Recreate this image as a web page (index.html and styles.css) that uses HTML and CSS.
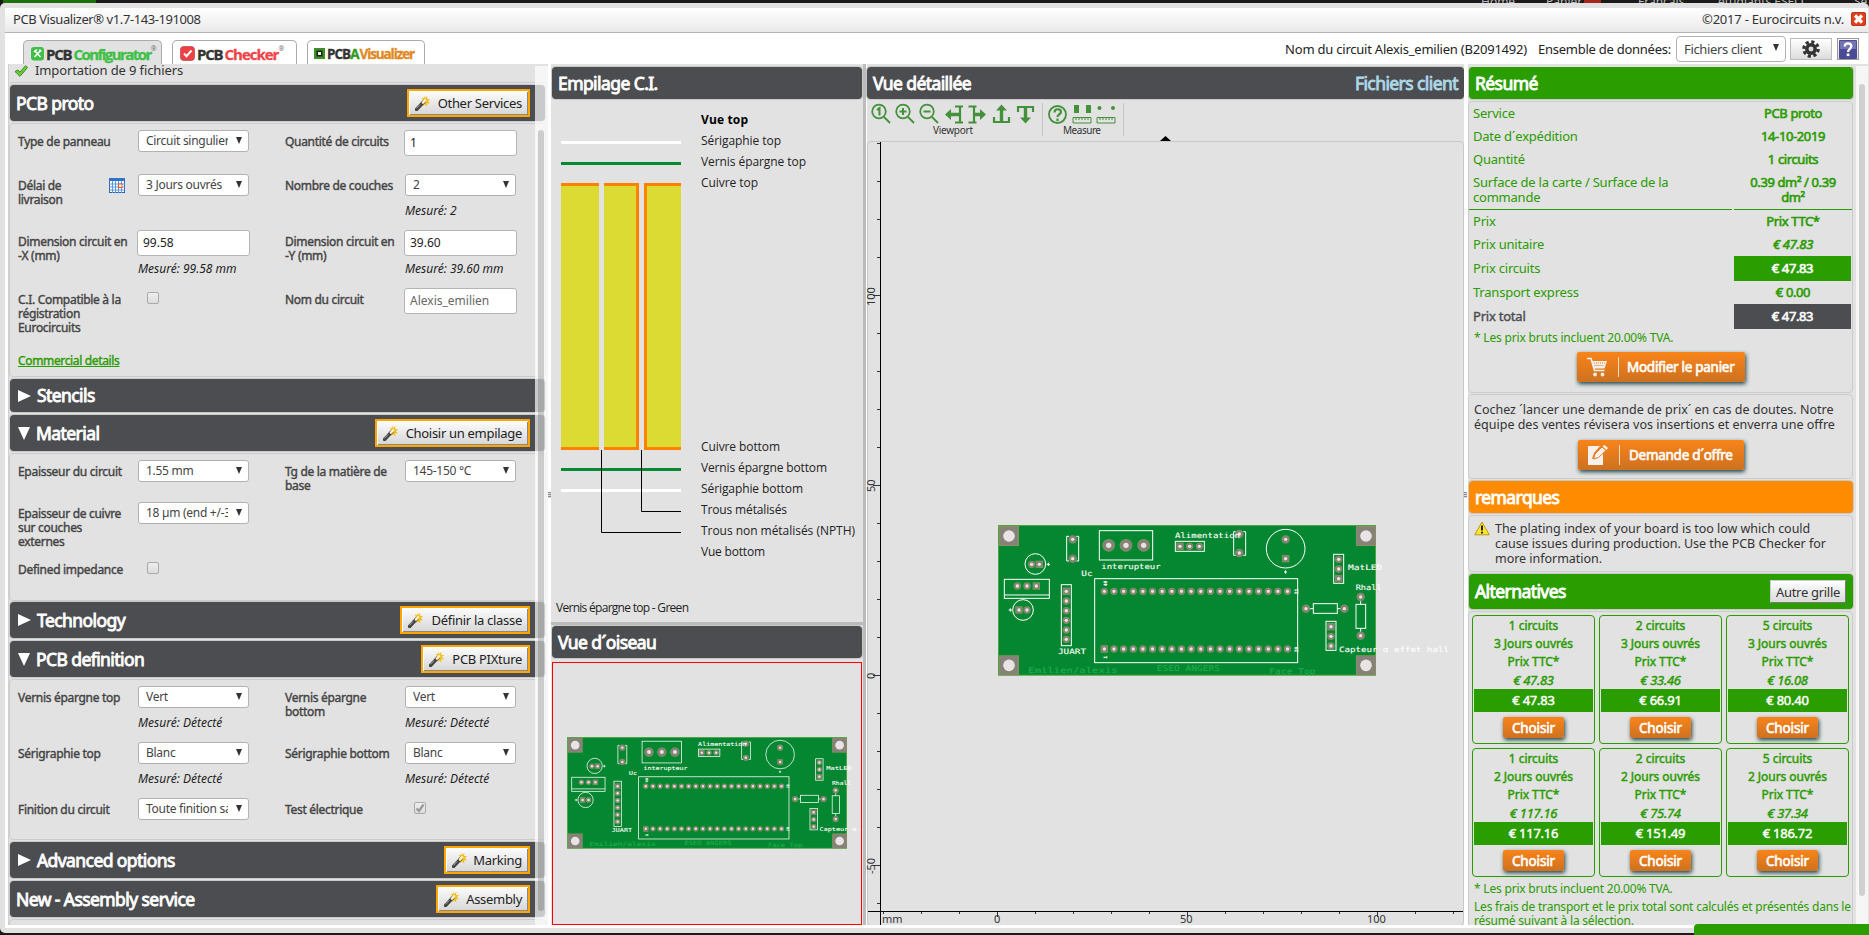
FILE: index.html
```html
<!DOCTYPE html>
<html lang="fr">
<head>
<meta charset="utf-8">
<title>PCB Visualizer</title>
<link rel="stylesheet" href="styles.css">
</head>
<body>
<svg class="defs" width="0" height="0">
  <defs>
    <g id="wand">
      <path d="M9 0l1 3 2.500-2-.5 3 3 0-2 2.200 2 2-3 .3.300 3-2.300-2-2 1.500.2-3-2.700-1 2.500-1.500L7 2.500l2.200.8z" fill="#f3bd1d"/>
      <path d="M1.500 14.500L9 6.500" stroke="#444" stroke-width="3.400" stroke-linecap="round"/>
      <path d="M1.500 13.300L5 9.500" stroke="#aaa" stroke-width="1"/>
      <path d="M8 7.500L10 5.300" stroke="#fff7c9" stroke-width="2.600" stroke-linecap="round"/>
    </g>
    <g id="hole"><circle r="12.500" fill="#7d9a4f"/><circle r="11" fill="#878279"/><circle r="5" fill="#e8e4e4"/></g>
    <g id="pin"><circle r="11" fill="#7d9a4f"/><circle r="9.500" fill="#878279"/><circle r="5" fill="#e8e4e4"/></g>
    <g id="sqpin"><rect x="-11" y="-11" width="22" height="22" fill="#7d9a4f"/><rect x="-9.500" y="-9.500" width="19" height="19" fill="#878279"/><circle r="5" fill="#e8e4e4"/></g>
    <g id="big"><circle r="19" fill="#7d9a4f"/><circle r="17.500" fill="#878279"/><circle r="8" fill="#e8e4e4"/></g>
    <g id="corner"><rect x="-30" y="-30" width="60" height="60" fill="#8d9a52"/><rect x="-28.500" y="-28.500" width="57" height="57" fill="#878279"/><circle r="17.500" fill="#e8e4e4"/></g>
    <g id="board">
      <rect x="40.500" y="46.500" width="1131" height="449" fill="#058731" stroke="#4ca53d" stroke-width="3"/>
      <use href="#corner" x="72" y="78"/><use href="#corner" x="1143" y="78"/><use href="#corner" x="72" y="466"/><use href="#corner" x="1143" y="466"/>
      <g fill="none" stroke="#fff" stroke-width="3">
        <path d="M252 79h-7v74h7M274 79h7v74h-7M752 65h-6v71h6M775 65h7v71h-7"/>
        <rect x="343" y="62" width="160" height="88"/><rect x="571" y="94" width="87" height="30"/>
        <circle cx="902" cy="116" r="58"/><circle cx="151" cy="162" r="31"/><circle cx="114" cy="300" r="31"/>
        <rect x="58" y="208" width="135" height="57"/><path d="M58 255h135"/>
        <rect x="229" y="224" width="30" height="183"/><rect x="329" y="206" width="609" height="252"/>
        <rect x="1046" y="133" width="30" height="87"/><rect x="1023" y="334" width="30" height="87"/>
        <rect x="985" y="281" width="72" height="29"/><path d="M975 296h10M1057 296h10M1127 272v11M1127 355v11"/>
        <rect x="1113" y="283" width="29" height="72"/>
        <path d="M185 163h10M190 158v10M71 300h10M76 295v10M897 186h9M901.500 181v10"/>
      </g>
      <use href="#hole" x="263" y="88"/><use href="#hole" x="263" y="146"/><use href="#hole" x="763" y="72"/><use href="#hole" x="763" y="129"/>
      <use href="#big" x="371" y="106"/><use href="#big" x="423" y="106"/><use href="#big" x="476" y="106"/>
      <use href="#sqpin" x="585" y="109"/><use href="#pin" x="614" y="109"/><use href="#pin" x="643" y="109"/>
      <use href="#hole" x="902" y="88"/><use href="#sqpin" x="902" y="146"/>
      <use href="#pin" x="140" y="163"/><use href="#sqpin" x="163" y="163"/><use href="#sqpin" x="102" y="300"/><use href="#pin" x="126" y="300"/>
      <use href="#pin" x="97" y="228"/><use href="#pin" x="126" y="228"/><use href="#sqpin" x="154" y="228"/>
      <use href="#sqpin" x="244" y="244"/><use href="#pin" x="244" y="273"/><use href="#pin" x="244" y="302"/><use href="#pin" x="244" y="331"/><use href="#pin" x="244" y="360"/><use href="#pin" x="244" y="388"/>
      <use href="#pin" x="1061" y="148"/><use href="#pin" x="1061" y="177"/><use href="#sqpin" x="1061" y="206"/>
      <use href="#sqpin" x="1038" y="350"/><use href="#pin" x="1038" y="379"/><use href="#pin" x="1038" y="408"/>
      <use href="#hole" x="963" y="296"/><use href="#hole" x="1078" y="296"/><use href="#hole" x="1127" y="261"/><use href="#hole" x="1127" y="377"/>
      <g stroke-linecap="round" stroke-dasharray="0 28.930" fill="none">
        <path d="M358 244H909M358 417H909" stroke="#7d9a4f" stroke-width="22"/>
        <path d="M358 244H909M358 417H909" stroke="#878279" stroke-width="19"/>
        <path d="M358 244H909M358 417H909" stroke="#e8e4e4" stroke-width="10"/>
      </g>
      <use href="#sqpin" x="358" y="417"/>
      <g class="silk">
        <text x="570" y="83" textLength="195" lengthAdjust="spacingAndGlyphs">Alimentation</text>
        <text x="349" y="178" textLength="178" lengthAdjust="spacingAndGlyphs">interupteur</text>
        <text x="289" y="197" textLength="34" lengthAdjust="spacingAndGlyphs">Uc</text>
        <text x="219" y="431" textLength="84" lengthAdjust="spacingAndGlyphs">JUART</text>
        <text x="1089" y="179" textLength="103" lengthAdjust="spacingAndGlyphs">MatLED</text>
        <text x="1112" y="241" textLength="78" lengthAdjust="spacingAndGlyphs">Rhall</text>
        <text x="1062" y="425" textLength="330" lengthAdjust="spacingAndGlyphs">Capteur α effet hall</text>
        <text class="tiny" transform="translate(365 229) rotate(-90)">40</text>
        <text class="tiny" transform="translate(938 253) rotate(-90)">21</text>
        <text class="tiny" transform="translate(938 427) rotate(-90)">20</text>
        <text class="tiny" transform="translate(365 446) rotate(-90)">1</text>
      </g>
      <g class="copper-text">
        <text x="130" y="488" textLength="268" lengthAdjust="spacingAndGlyphs">Emilien/alexis</text>
        <text x="515" y="483" textLength="190" lengthAdjust="spacingAndGlyphs">ESEO ANGERS</text>
        <text x="853" y="492" textLength="139" lengthAdjust="spacingAndGlyphs">Face Top</text>
      </g>
    </g>
  </defs>
</svg>

<div class="site-strip"><i class="site-tab"></i><div class="site-links"><span class="s1">Home</span><span class="s2">Panier</span><b></b><span class="s3">Français</span><span class="s4">étudiants ESEO</span><span class="s5">Se</span></div></div>
<div class="window">
  <header class="titlebar">
    <span class="app-name">PCB Visualizer® v1.7-143-191008</span>
    <span class="copyright">©2017 - Eurocircuits n.v.</span>
    <svg class="close" width="15" height="14" viewBox="0 0 15 14"><rect x=".5" y=".5" width="14" height="13" rx="1.500" fill="#e2401c" stroke="#b9371c"/><path d="M4 3.500l7 7M11 3.500l-7 7" stroke="#fff" stroke-width="3.200"/></svg>
  </header>
  <nav class="toolbar">
    <div class="tabs">
      <div class="tab t1 active">
        <svg width="13" height="14" viewBox="0 0 13 14"><rect width="13" height="13.500" rx="3" fill="#3fbf45"/><path d="M3.500 3.500l6 6.500M9.500 3.500l-6 6.500" stroke="#fff" stroke-width="1.500"/><path d="M3 5l3-2.500M8.500 2.500l1.800 2" stroke="#fff" stroke-width="1.500"/></svg>
        <b class="pcb">PCB</b><b class="green">Configurator</b><sup>®</sup>
      </div>
      <div class="tab t2">
        <svg width="15" height="15" viewBox="0 0 15 15"><rect x=".7" y=".7" width="13.600" height="13.600" rx="2.500" fill="#f04046" stroke="#c3434a"/><path d="M4 7.500l2.500 2.700L11.500 4.500" stroke="#fff" stroke-width="2" fill="none"/></svg>
        <b class="pcb">PCB</b><b class="red">Checker</b><sup>®</sup>
      </div>
      <div class="tab t3">
        <svg width="11" height="11" viewBox="0 0 11 11"><rect width="11" height="11" fill="#3f8f2d"/><rect x="2.500" y="2.500" width="6" height="6" fill="#13250f"/><rect x="4" y="4" width="3" height="3" fill="#eee"/></svg>
        <b class="pcb">PCB</b><b class="agreen">A</b><b class="orange">Visualizer</b>
      </div>
    </div>
    <span class="circuit">Nom du circuit Alexis_emilien (B2091492)</span>
    <span class="dataset">Ensemble de données:</span>
    <div class="select big"><span>Fichiers client</span></div>
    <button class="gear"><svg width="18" height="18" viewBox="-8 -8 16 16"><circle r="5.300" fill="#333"/><circle r="6.400" fill="none" stroke="#333" stroke-width="2.800" stroke-dasharray="2.800 2.227"/><circle r="2.200" fill="#ddd"/></svg></button>
    <button class="help"><svg width="18" height="19" viewBox="0 0 18 19"><rect width="18" height="19" rx="1" fill="#4a4a96"/><rect x="1" y="1" width="16" height="8" fill="#7474b5"/><path d="M5.800 6.500C5.800 2.200 12.300 2.500 12.300 6.200 12.300 8.800 9 8.800 9 12" fill="none" stroke="#fff" stroke-width="2.300"/><rect x="7.700" y="13.500" width="2.700" height="2.600" fill="#fff"/></svg></button>
  </nav>

  <main>
    <section class="left">
      <div class="import"><svg width="14" height="12" viewBox="0 0 14 12"><path d="M1 6.500l3-1.500 1.800 2.300L11.500.8l2 1.700L6 11.300z" fill="#74cc3d" stroke="#2c8a13"/></svg>Importation de 9 fichiers</div>
      <div class="bar b36"><h2>PCB proto</h2><button class="wiz w1"><svg width="16" height="16"><use href="#wand"/></svg>Other Services</button></div>
      <div class="box p1">
        <div class="row r44"><label>Type de panneau</label><div class="c"><div class="select"><span>Circuit singulier</span></div></div><label>Quantité de circuits</label><div class="c"><div class="input">1</div></div></div>
        <div class="row r56"><label class="with-cal"><span>Délai de<br>livraison</span><svg width="16" height="15" viewBox="0 0 16 15"><rect x=".5" y=".5" width="15" height="14" fill="#fff" stroke="#2b65b5"/><rect width="16" height="3" fill="#2f74c9"/><path d="M3.500 3v12M6.500 3v12M9.500 3v12M12.500 3v12M0 6h16M0 9h16M0 12h16" stroke="#5f97dc"/><rect x="9.500" y="6" width="3.500" height="3.500" fill="#fff" stroke="#e4572c"/></svg></label><div class="c"><div class="select"><span>3 Jours ouvrés</span></div></div><label>Nombre de couches</label><div class="c"><div class="select"><span>2</span></div><em>Mesuré: 2</em></div></div>
        <div class="row r58"><label>Dimension circuit en<br>-X (mm)</label><div class="c"><div class="input">99.58</div><em class="near">Mesuré: 99.58 mm</em></div><label>Dimension circuit en<br>-Y (mm)</label><div class="c"><div class="input">39.60</div><em class="near">Mesuré: 39.60 mm</em></div></div>
        <div class="row r61"><label>C.I. Compatible à la<br>régistration<br>Eurocircuits</label><div class="c"><i class="check"></i></div><label>Nom du circuit</label><div class="c"><div class="input dim">Alexis_emilien</div></div></div>
        <a>Commercial details</a>
      </div>
      <div class="bar b33"><i class="tri closed"></i><h2>Stencils</h2></div>
      <div class="bar b36"><i class="tri open"></i><h2>Material</h2><button class="wiz w2"><svg width="16" height="16"><use href="#wand"/></svg>Choisir un empilage</button></div>
      <div class="box p2">
        <div class="row r42"><label>Epaisseur du circuit</label><div class="c"><div class="select"><span>1.55 mm</span></div></div><label>Tg de la matière de<br>base</label><div class="c"><div class="select"><span>145-150 °C</span></div></div></div>
        <div class="row r56"><label>Epaisseur de cuivre<br>sur couches<br>externes</label><div class="c"><div class="select"><span>18 µm (end +/-35)</span></div></div></div>
        <div class="row"><label>Defined impedance</label><div class="c"><i class="check"></i></div></div>
      </div>
      <div class="bar b36"><i class="tri closed"></i><h2>Technology</h2><button class="wiz w3"><svg width="16" height="16"><use href="#wand"/></svg>Définir la classe</button></div>
      <div class="bar b36"><i class="tri open"></i><h2>PCB definition</h2><button class="wiz w4"><svg width="16" height="16"><use href="#wand"/></svg>PCB PIXture</button></div>
      <div class="box p3">
        <div class="row r56"><label>Vernis épargne top</label><div class="c"><div class="select"><span>Vert</span></div><em>Mesuré: Détecté</em></div><label>Vernis épargne<br>bottom</label><div class="c"><div class="select"><span>Vert</span></div><em>Mesuré: Détecté</em></div></div>
        <div class="row r56"><label>Sérigraphie top</label><div class="c"><div class="select"><span>Blanc</span></div><em>Mesuré: Détecté</em></div><label>Sérigraphie bottom</label><div class="c"><div class="select"><span>Blanc</span></div><em>Mesuré: Détecté</em></div></div>
        <div class="row"><label>Finition du circuit</label><div class="c"><div class="select"><span>Toute finition sans plomb</span></div></div><label>Test électrique</label><div class="c"><i class="check"><svg width="10" height="10" viewBox="0 0 10 10"><path d="M1.500 5.500L4 8 8.500 1.500" fill="none" stroke="#999" stroke-width="2.200"/></svg></i></div></div>
      </div>
      <div class="bar b36"><i class="tri closed"></i><h2>Advanced options</h2><button class="wiz w5"><svg width="16" height="16"><use href="#wand"/></svg>Marking</button></div>
      <div class="bar b36"><h2>New - Assembly service</h2><button class="wiz w6"><svg width="16" height="16"><use href="#wand"/></svg>Assembly</button></div>
      <div class="box last"></div>
      <div class="scroll"><i></i></div>
    </section>
    <div class="gutter"><i></i></div>

    <section class="stack">
      <div class="bar b32"><h2>Empilage C.I.</h2></div>
      <svg class="layers" width="312" height="523" viewBox="551 99 312 523">
        <path d="M561 142.500H681M561 490.500H681" stroke="#fff" stroke-width="3"/>
        <path d="M561 163.500H681M561 469.500H681" stroke="#078a32" stroke-width="3"/>
        <path d="M561 183h38v267h-38zM604 183h35v267h-35zM644 183h37v267h-37z" fill="#fe8200"/>
        <path d="M561 186h38v261h-38zM604 186h32v261h-32zM647 186h34v261h-34z" fill="#dbdb33"/>
        <path d="M601.500 450V532.500H681M641.500 450V511.500H681" fill="none" stroke="#000"/>
        <g class="layer-names">
          <text x="701" y="124" class="strong" textLength="47">Vue top</text><text x="701" y="145" textLength="80">Sérigaphie top</text><text x="701" y="166" textLength="105">Vernis épargne top</text><text x="701" y="187" textLength="57">Cuivre top</text>
          <text x="701" y="451" textLength="79">Cuivre bottom</text><text x="701" y="472" textLength="126">Vernis épargne bottom</text><text x="701" y="493" textLength="102">Sérigaphie bottom</text><text x="701" y="514" textLength="86">Trous métalisés</text><text x="701" y="535" textLength="154">Trous non métalisés (NPTH)</text><text x="701" y="556" textLength="64">Vue bottom</text>
          <text x="556" y="612" textLength="133">Vernis épargne top - Green</text>
        </g>
      </svg>
      <div class="split"></div>
      <div class="bar b32"><h2>Vue d´oiseau</h2></div>
      <div class="bird"><svg width="308" height="261" viewBox="553 663 308 261"><g transform="translate(557.400 725.900) scale(.24690)"><use href="#board"/></g></svg></div>
    </section>
    <div class="vsplit"></div>

    <section class="detail">
      <div class="bar b32"><h2>Vue détaillée</h2><h2 class="file">Fichiers client</h2></div>
      <div class="tools">
        <svg width="270" height="42" viewBox="867 99 270 42">
          <g fill="none" stroke="#44913b" stroke-width="1.800">
            <circle cx="879" cy="111.500" r="6.800"/><path d="M884 117l6 6"/><circle cx="903" cy="111.500" r="6.800"/><path d="M908 117l6 6"/><circle cx="927" cy="111.500" r="6.800"/><path d="M932 117l6 6"/>
            <path d="M877 110l2.500-2v7.500M899.500 111.500h7M903 108v7M923.500 111.500h7" stroke-width="2"/>
            <path d="M960 106v17M955 106.500h8M955 122.500h8M974 106v17M968.500 106.500h8M968.500 122.500h8" stroke-width="2.200"/>
            <path d="M950 114.500h9M974 114.500h7" stroke-width="3.400"/>
            <path d="M994 117v5h15V117M1018 112v-5h15v5" stroke-width="2.200"/>
            <path d="M1001.500 110v12M1025.500 107v11" stroke-width="3.400"/>
            <circle cx="1057.500" cy="114.500" r="8.500"/><path d="M1054.500 112.500c0-4.500 6.500-4 6.500-.5 0 2.500-3.500 2-3.500 5M1057.500 118.500v2.500" stroke-width="2.200"/>
            <path d="M1073 117.500h18v5.500h-18zM1097 117.500h18v5.500h-18zM1076 118v2M1079 118v2M1082 118v2M1085 118v2M1088 118v2M1100 118v2M1103 118v2M1106 118v2M1109 118v2M1112 118v2" stroke-width="1"/>
          </g>
          <path d="M945 114.500l6-5.500v11zM986 114.500l-6-5.500v11zM1001.500 104.500l5.500 6h-11zM1025.500 123.500l5.500-6h-11zM1074 105h5v8h-5zM1086 105h5v8h-5z" fill="#44913b"/><circle cx="1099.500" cy="108" r="2" fill="#44913b"/><circle cx="1113" cy="108" r="2" fill="#44913b"/>
          <path d="M1042.500 103v33M1123.500 103v33" stroke="#c4c4c4"/>
          <g class="tool-names"><text x="933" y="134" textLength="40">Viewport</text><text x="1063" y="134" textLength="38">Measure</text></g>
        </svg>
      </div>
      <div class="canvas">
        <svg width="595" height="783" viewBox="868 142 595 783">
          <path d="M1160 141l5.500-5 5.500 5z" fill="#000"/>
          <path d="M880.500 142V925M868 911.500H1463" stroke="#000"/>
          <path d="M877 143.500h3M877 181.500h3M877 219.500h3M877 257.500h3M873 295.500h7M877 333.500h3M877 371.500h3M877 409.500h3M877 447.500h3M873 485.500h7M877 523.500h3M877 561.500h3M877 599.500h3M877 637.500h3M873 675.500h7M877 713.500h3M877 751.500h3M877 789.500h3M877 827.500h3M873 865.500h7M877 903.500h3" stroke="#333"/>
          <path d="M883.500 912v2M921.500 912v2M959.500 912v2M997.500 912v5M1035.500 912v2M1073.500 912v2M1111.500 912v2M1149.500 912v2M1187.500 912v5M1225.500 912v2M1263.500 912v2M1301.500 912v2M1339.500 912v2M1377.500 912v5M1415.500 912v2M1453.500 912v2" stroke="#333"/>
          <g class="scale"><text x="882" y="923">mm</text><text x="994" y="923">0</text><text x="1180" y="923">50</text><text x="1367" y="923">100</text>
            <text transform="translate(875 679) rotate(-90)">0</text><text transform="translate(875 492) rotate(-90)">50</text><text transform="translate(875 306) rotate(-90)">100</text><text transform="translate(875 874) rotate(-90)">-50</text></g>
          <g transform="translate(985 510) scale(.33333)"><use href="#board"/></g>
        </svg>
      </div>
    </section>
    <div class="gutter narrow"><i></i></div>

    <section class="right">
      <div class="content">
        <div class="bar b32 greenbar"><h2>Résumé</h2></div>
        <div class="box summary">
          <div class="kv"><span>Service</span><b>PCB proto</b></div>
          <div class="kv"><span>Date d´expédition</span><b>14-10-2019</b></div>
          <div class="kv"><span>Quantité</span><b>1 circuits</b></div>
          <div class="kv two"><span>Surface de la carte / Surface de la<br>commande</span><b>0.39 dm² / 0.39<br>dm²</b></div>
          <div class="kv"><span>Prix</span><b>Prix TTC*</b></div>
          <div class="kv"><span>Prix unitaire</span><b class="it">€ 47.83</b></div>
          <div class="kv k25"><span>Prix circuits</span><b class="fill">€ 47.83</b></div>
          <div class="kv"><span>Transport express</span><b>€ 0.00</b></div>
          <div class="kv k25 total"><span>Prix total</span><b class="fill">€ 47.83</b></div>
          <p class="tva">* Les prix bruts incluent 20.00% TVA.</p>
          <button class="cta cart"><svg width="20" height="20" viewBox="0 0 20 20"><path d="M0 1.500h4l3.500 12h10" fill="none" stroke="#f3eeea" stroke-width="1.700"/><path d="M5 4h15l-2.500 7.500H7.200z" fill="#f3eeea"/><path d="M7 6h11M7.500 8.500h10" stroke="#e87c1c" stroke-dasharray="1 1"/><circle cx="8" cy="17.500" r="1.900" fill="#f3eeea"/><circle cx="15.500" cy="17.500" r="1.900" fill="#f3eeea"/></svg><i></i>Modifier le panier</button>
        </div>
        <div class="box quote"><p>Cochez ´lancer une demande de prix´ en cas de doutes. Notre<br>équipe des ventes révisera vos insertions et enverra une offre</p>
          <button class="cta offer"><svg width="20" height="20" viewBox="0 0 20 20"><path d="M0 1h12L6 8l-2 6 6-2 5-4.500V20H0z" fill="#f6f1ec"/><path d="M5.500 14l1.500-5L14 2l4 3.500-7.500 7z" fill="#f6f1ec" stroke="#e57a1c"/><path d="M14.500 1.500l2-1.500L20 3l-1.500 2z" fill="#f6f1ec"/></svg><i></i>Demande d´offre</button></div>
        <div class="bar b32 orangebar"><h2>remarques</h2></div>
        <div class="box warn"><svg width="16" height="15" viewBox="0 0 16 15"><path d="M8 1L15.300 13.800H.7z" fill="#ffe52e" stroke="#b79a1d" stroke-linejoin="round"/><path d="M8 4.500v5M8 10.800v1.700" stroke="#222" stroke-width="2"/></svg><p>The plating index of your board is too low which could<br>cause issues during production. Use the PCB Checker for<br>more information.</p></div>
        <div class="bar b35 greenbar"><h2>Alternatives</h2><button class="grille">Autre grille</button></div>
        <div class="box alts">
          <div class="cards">
            <div class="card"><p>1 circuits</p><p>3 Jours ouvrés</p><p>Prix TTC*</p><p class="it">€ 47.83</p><b>€ 47.83</b><button>Choisir</button></div>
            <div class="card"><p>2 circuits</p><p>3 Jours ouvrés</p><p>Prix TTC*</p><p class="it">€ 33.46</p><b>€ 66.91</b><button>Choisir</button></div>
            <div class="card"><p>5 circuits</p><p>3 Jours ouvrés</p><p>Prix TTC*</p><p class="it">€ 16.08</p><b>€ 80.40</b><button>Choisir</button></div>
            <div class="card"><p>1 circuits</p><p>2 Jours ouvrés</p><p>Prix TTC*</p><p class="it">€ 117.16</p><b>€ 117.16</b><button>Choisir</button></div>
            <div class="card"><p>2 circuits</p><p>2 Jours ouvrés</p><p>Prix TTC*</p><p class="it">€ 75.74</p><b>€ 151.49</b><button>Choisir</button></div>
            <div class="card"><p>5 circuits</p><p>2 Jours ouvrés</p><p>Prix TTC*</p><p class="it">€ 37.34</p><b>€ 186.72</b><button>Choisir</button></div>
          </div>
          <p class="note1">* Les prix bruts incluent 20.00% TVA.</p>
          <p class="note2">Les frais de transport et le prix total sont calculés et présentés dans le<br>résumé suivant à la sélection.</p>
        </div>
      </div>
      <div class="track"><i></i></div>
    </section>
  </main>
</div>
<div class="chat-tab"></div>
</body>
</html>
```
FILE: styles.css
```css
* { box-sizing: border-box; }
body { margin: 0; width: 1869px; height: 935px; overflow: hidden; position: relative; background: #1c1b1a; font: 12px/14px "Noto Sans", "Open Sans", sans-serif; color: #333; }
h2, p { margin: 0; font-weight: normal; white-space: nowrap; }
button { font: inherit; margin: 0; padding: 0; border: 0; white-space: nowrap; }
svg { display: block; flex: none; }
.defs { position: absolute; }

.site-strip { height: 3px; overflow: hidden; display: flex; align-items: flex-end; }
.site-tab { width: 93px; height: 3px; margin-left: 3px; background: #1f6f0b; flex: none; }
.site-links { display: flex; margin-left: 1385px; color: #bbb; line-height: 14px; margin-bottom: -6px; flex: none; }
.site-links span { white-space: nowrap; }
.s1 { width: 65px; } .s2 { width: 38px; }
.site-links b { width: 17px; height: 14px; background: #a32620; border-radius: 3px; margin-right: 37px; }
.s3 { width: 80px; } .s4 { width: 136px; }

.window { height: 930px; background: #e2e2e2; border-radius: 5px; padding: 5px 1px 5px 5px; }
.titlebar { height: 25px; background: linear-gradient(#fff, #e9e9e9); border-bottom: 1px solid #b3b3b3; display: flex; align-items: center; padding: 0 2px 3px 8px; font-size: 13px; color: #333; }
.app-name { letter-spacing: -.42px; }
.copyright { margin-left: auto; letter-spacing: -.22px; }
.close { margin: 1px 0 0 7px; }
.toolbar { height: 31px; background: #fff; display: flex; align-items: center; padding: 0 9px 0 18px; color: #222; font-size: 13px; white-space: nowrap; }
.tabs { display: flex; gap: 10px; align-self: flex-end; margin-right: auto; }
.tab { height: 24px; border: 1px solid #aaa; border-bottom: 0; border-radius: 5px 5px 0 0; display: flex; align-items: center; padding: 2px 0 0 8px; font: 15px/20px "Open Sans", sans-serif; background: #fff; }
.tab.active { background: #e2e2e2; }
.tab b { -webkit-text-stroke: .3px; }
.t1 { width: 139px; padding-left: 7px; } .t2 { width: 125px; padding-left: 7px; } .t3 { width: 118px; padding-left: 6px; }
.t1 b, .t2 b { letter-spacing: -1.2px; }
.pcb { color: #333; margin-left: 2px; margin-right: 2px; }
.tab .green { color: #3fbf45; font-weight: 700; letter-spacing: -1.55px; }
.red { color: #ef4348; }
.tab.t2 .red { letter-spacing: -1px; }
.tab.t3 b { font-size: 13.500px; letter-spacing: -1px; }
.t3 .pcb { margin-right: 0; }
.agreen { color: #2f9a22; margin-right: 1px; }
.tab.t3 .orange { color: #e0881f; font-weight: 700; letter-spacing: -1.100px; }
.tab sup { font-size: 7px; line-height: 8px; align-self: flex-start; margin-top: 2px; color: #666; }
.circuit { letter-spacing: -.22px; }
.dataset { margin: 0 5px 0 11px; letter-spacing: -.25px; }
.select { width: 111px; height: 22px; background: #fff; border: 1px solid #b2b2b2; border-radius: 3px; display: flex; align-items: center; justify-content: space-between; padding: 0 6px 0 7px; color: #444; }
.select span { width: 82px; overflow: hidden; white-space: nowrap; letter-spacing: -.28px; }
.select::after { content: ""; border: 3px solid transparent; border-top: 7px solid #333; border-bottom: 0; flex: none; margin-top: -2px; }
.select.big { width: 110px; height: 26px; border-radius: 4px; }
.select.big span { letter-spacing: -.35px; }
.gear, .help { height: 22px; background: linear-gradient(#fff, #dcdcdc); border: 1px solid #bbb; display: grid; place-items: center; }
.gear { width: 42px; margin: 1px 5px 0 4px; } .help { width: 22px; margin-top: 1px; border-color: #999; }

main { height: 864px; background: #fff; border-bottom: 3px solid #fff; padding-left: 3px; display: flex; overflow: hidden; }
section { background: #e2e2e2; flex: none; }
.bar { background: #4c4d50; border-radius: 3px; color: #fff; display: flex; align-items: center; padding: 0 15px 0 6px; margin-bottom: 2px; outline: 1px solid #c9c9c9; flex: none; }
.b36 { height: 36px; margin-bottom: 3px; } .b33 { height: 33px; margin-bottom: 3px; } .b32 { height: 32px; } .b35 { height: 35px; }
.bar h2 { font-size: 17.500px; line-height: 24px; letter-spacing: -.58px; -webkit-text-stroke: .85px; padding-bottom: 1px; }
.box { border: 1px solid #cbcbcb; border-radius: 4px; flex: none; }

.left { width: 540px; height: 861px; position: relative; padding: 0 2px 0 1px; border-left: 1px solid #d0d0d0; display: flex; flex-direction: column; overflow: hidden; }
.import { height: 19px; flex: none; margin-bottom: 2px; border-bottom: 1px solid #cbcbcb; display: flex; gap: 7px; padding-left: 4px; font-size: 13px; align-items: flex-start; line-height: 13px; color: #333; letter-spacing: -.12px; }
.import svg { margin-top: 1px; }
.left .bar { width: 535px; }
.left .box { width: 537px; margin-left: -1px; }
.wiz { height: 28px; margin-left: auto; border: 2px solid #ffa500; background: linear-gradient(#fcfcfc, #d6d6d6); background-clip: padding-box; box-shadow: inset 1px 1px #fff, inset -1px -1px #888; font-size: 13px; color: #222; display: flex; align-items: center; justify-content: space-between; padding: 0 6px 1px 6px; letter-spacing: -.3px; }
.w1 { width: 123px; } .w2 { width: 155px; } .w3 { width: 130px; } .w4 { width: 109px; } .w5 { width: 86px; } .w6 { width: 94px; }
.left .box { margin-top: -1px; padding: 6px 0 0 8px; }
.p1 { height: 254px; margin-bottom: 2px; } .p2 { height: 148px; margin-bottom: 1px; } .p3 { height: 161px; margin-bottom: 2px; }
.left .last { height: 20px; padding: 0; }
.row { display: grid; grid-template-columns: 120px 147px 120px 120px; height: 42px; }
.r42 { height: 42px; } .r44 { height: 44px; } .r56 { height: 56px; } .r58 { height: 58px; } .r61 { height: 66px; }
label { padding-top: 5px; color: #444; -webkit-text-stroke: .4px; letter-spacing: -.3px; white-space: nowrap; }
.with-cal { display: flex; justify-content: space-between; padding-right: 13px; }
.with-cal svg { margin-top: -1px; }
.input { width: 113px; height: 26px; margin-left: -1px; background: #fff; border: 1px solid #b5b5b5; border-radius: 3px; padding: 5px 5px; color: #222; }
.input.dim { color: #666; }
em { display: block; margin-top: 8px; white-space: nowrap; letter-spacing: 0; color: #222; }
em.near { margin-top: 6px; }
.check { display: block; width: 12px; height: 12px; border: 1px solid #aaa; border-radius: 2px; background: linear-gradient(#eee, #ddd); margin: 4px 0 0 9px; }
.left a { display: block; color: #2a9c00; text-decoration: underline; -webkit-text-stroke: .4px; letter-spacing: -.35px; }
.tri { margin: 0 6px 0 2px; border: 6px solid transparent; flex: none; }
.tri.closed { border-left: 13px solid #fff; border-right: 0; }
.tri.open { border-top: 13px solid #fff; border-bottom: 0; border-left-width: 6.500px; border-right-width: 6.500px; }
.scroll { position: absolute; top: 2px; right: 0; width: 13px; height: 859px; background: rgba(255,255,255,.7); padding: 64px 3px 0; }
.scroll i { display: block; width: 6px; height: 781px; border-radius: 3px; background: rgba(0,0,0,.17); }

.gutter { width: 3px; background: #fff; display: flex; align-items: center; flex: none; }
.gutter i { width: 3px; height: 6px; background: repeating-linear-gradient(#888 0 1px, #ddd 1px 2px); }
.gutter.narrow { width: 4px; }
.stack { width: 312px; padding: 3px 1px 0; }
.stack .bar, .detail .bar { margin-bottom: 0; }
.layers { margin-left: -1px; }
.layer-names { font: 12px "Open Sans", sans-serif; fill: #222; }
.strong { font-weight: bold; fill: #000; }
.split { height: 3px; background: #bbb; margin: 0 -1px 1px; }
.bird { margin-top: 4px; height: 263px; border: 1px solid red; overflow: hidden; }
.vsplit { width: 3px; background: #bbb; flex: none; margin-right: 1px; }
.detail { width: 597px; padding: 3px 0 0; }
.file { margin-left: auto; color: #add8e6; }
.detail .bar { padding-right: 6px; }
.tools { height: 42px; }
.tool-names { font-size: 10px; fill: #333; }
.canvas { height: 785px; border: 1px solid #c8c8c8; border-radius: 4px; }
.canvas > svg { overflow: visible; }
.scale { font-size: 11px; fill: #333; }
.silk text { font: 22px "DejaVu Sans Mono", monospace; fill: #fff; stroke: #fff; stroke-width: .3px; }
.silk .tiny { font-size: 14px; font-weight: bold; }
.copper-text text { font: 24px "DejaVu Sans Mono", monospace; fill: #1fae4c; stroke: #1fae4c; stroke-width: .3px; }

.right { width: 401px; display: flex; padding-top: 3px; }
.content { width: 388px; height: 858px; overflow: hidden; padding: 0 0 0 1px; color: #2a9c00; display: flex; flex-direction: column; }
.content .bar { width: 384px; }
.content .box { width: 385px; margin-left: -1px; }
.bar.greenbar { background: #2a9d00; } .bar.orangebar { background: #ff8c00; }
.summary { height: 292px; margin-bottom: 1px; }
.kv { height: 23px; display: grid; grid-template-columns: 263px 1fr; column-gap: 2px; font-size: 13px; line-height: 15px; letter-spacing: -.22px; }
.kv span { padding: 4px 0 0 4px; white-space: nowrap; }
.kv b { padding-top: 4px; font-weight: normal; -webkit-text-stroke: .6px; text-align: center; letter-spacing: -.38px; white-space: nowrap; }
.kv.two { height: 39px; } .kv.two > * { border-bottom: 1px solid #2a9c00; }
.k25 { height: 25px; }
.kv .fill { background: #2a9d00; color: #fff; margin-right: 1px; padding-top: 5px; }
.k25 span { padding-top: 5px; }
.total span { color: #4c4d50; -webkit-text-stroke: .4px; }
.kv.total .fill { background: #4c4d50; }
.it { font-style: italic; }
.tva { padding: 2px 0 0 5px; height: 23px; letter-spacing: -.18px; }
.cta { height: 30px; background: linear-gradient(#f98419, #cd7120); border-radius: 2px; box-shadow: 1px 2px 4px #1d4549; color: #fff; font-size: 13.500px; -webkit-text-stroke: .6px; letter-spacing: -.28px; display: flex; align-items: center; padding: 0 10px; margin: 0 auto; }
.cta i { width: 1px; height: 20px; background: #f3dcc8; margin: 0 9px 0 11px; }
.cart { width: 168px; } .offer { width: 166px; }
.quote { height: 85px; margin-bottom: 2px; padding: 7px 0 0 5px; color: #333; }
.quote p, .warn p { font-size: 12.500px; line-height: 15px; letter-spacing: 0; }
.quote .cta { margin-top: 8px; margin-left: 104px; }
.warn { height: 57px; margin-bottom: 2px; display: flex; gap: 5px; padding: 5px 0 0 5px; color: #333; }
.warn p { letter-spacing: -.03px; }
.grille { margin-left: auto; width: 76px; height: 23px; margin-right: -8px; background: linear-gradient(#fefefe, #dadada); border: 1px solid #ccc; border-right-color: #777; border-bottom-color: #777; font-size: 13px; letter-spacing: -.3px; color: #333; }
.alts { height: 340px; padding: 3px 3px 0; }
.cards { display: grid; grid-template-columns: repeat(3, 123px); gap: 4px; }
.card { height: 129px; border: 1px solid #2a9c00; border-radius: 4px; text-align: center; display: flex; flex-direction: column; padding: 1px; -webkit-text-stroke: .45px; }
.card p { height: 18px; line-height: 17px; letter-spacing: -.05px; }
.card .it { font-size: 13px; letter-spacing: -.3px; line-height: 18px; }
.card b { background: #2a9d00; color: #fff; height: 23px; line-height: 23px; font-size: 13px; font-weight: normal; letter-spacing: -.25px; }
.card button { width: 61px; height: 21px; margin: 5px auto 0; color: #fff; font-size: 13.500px; -webkit-text-stroke: .6px; background: linear-gradient(#f98419, #cd7120); border-radius: 2px; box-shadow: 1px 2px 4px #1d4549; letter-spacing: -.15px; }
.note1 { margin: 5px 0 4px 2px; letter-spacing: -.2px; } .note2 { margin-left: 2px; letter-spacing: -.21px; }
.track { width: 12px; background: #f6f6f6; margin-top: -1px; padding: 18px 3px 0; }
.track i { display: block; width: 6px; height: 812px; border-radius: 3px; background: #d0d0d0; }
.chat-tab { position: absolute; left: 1694px; top: 924px; width: 175px; height: 11px; background: #2a9d00; border-radius: 4px 0 0 0; }
```
